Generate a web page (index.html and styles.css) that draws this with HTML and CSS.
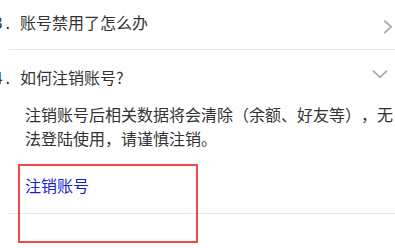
FILE: index.html
```html
<!DOCTYPE html>
<html lang="zh-CN">
<head>
<meta charset="utf-8">
<title>常见问题</title>
<link rel="stylesheet" href="styles.css">
</head>
<body>
<div class="faq">
  <div class="item">
    <div class="q">
      <span class="num"><span class="d">3</span>.</span>
      <span class="title">账号禁用了怎么办</span>
      <svg class="chev" width="24" height="24" viewBox="0 0 24 24"><polyline points="13.3,10.6 20.2,16.8 13.3,23" /></svg>
    </div>
  </div>
  <div class="item open">
    <div class="q">
      <span class="num"><span class="d">4</span>.</span>
      <span class="title">如何注销账号?</span>
      <svg class="chev" width="24" height="24" viewBox="0 0 24 24"><polyline points="2,5.6 9,12.3 16,5.6" /></svg>
    </div>
    <div class="a">
      <p class="desc">注销账号后相关数据将会清除（余额、好友等），无法登陆使用，请谨慎注销。</p>
      <a class="link" href="#">注销账号</a>
    </div>
  </div>
</div>
<div class="highlight"></div>
</body>
</html>
```
FILE: styles.css
```css
html, body {
  margin: 0;
  padding: 0;
  background: #fff;
}
body {
  width: 395px;
  height: 248px;
  overflow: hidden;
  position: relative;
  font-family: "Noto Sans CJK SC", "Noto Sans", sans-serif;
  font-size: 16px;
  color: #333;
  text-spacing-trim: space-all;
}
.faq {
  margin-top: -5px;
}
.item {
  margin-left: 9px;
  border-bottom: 1px solid #e6e6e6;
}
.q {
  display: flex;
  align-items: center;
  padding: 15px 0 15px;
  line-height: 24px;
}
.open .q {
  padding-bottom: 13px;
}
.num {
  flex: none;
  box-sizing: border-box;
  width: 20px;
  margin-left: -9px;
  padding-right: 10px;
  text-align: right;
  white-space: nowrap;
  display: flex;
  justify-content: flex-end;
}
.d {
  margin-right: 3px;
}
.title {
  flex: 1;
}
.chev {
  flex: none;
  fill: none;
  stroke: #aaa;
  stroke-width: 1.8;
}
.a {
  padding: 0 0 16px 16px;
}
.desc {
  margin: 0;
  line-height: 24px;
}
.link {
  display: inline-block;
  margin-top: 23px;
  line-height: 24px;
  color: #1c1cd0;
  text-decoration: none;
}
.highlight {
  position: absolute;
  left: 18px;
  top: 164px;
  width: 180px;
  height: 79px;
  box-sizing: border-box;
  border: 2px solid #f5474c;
}
```
